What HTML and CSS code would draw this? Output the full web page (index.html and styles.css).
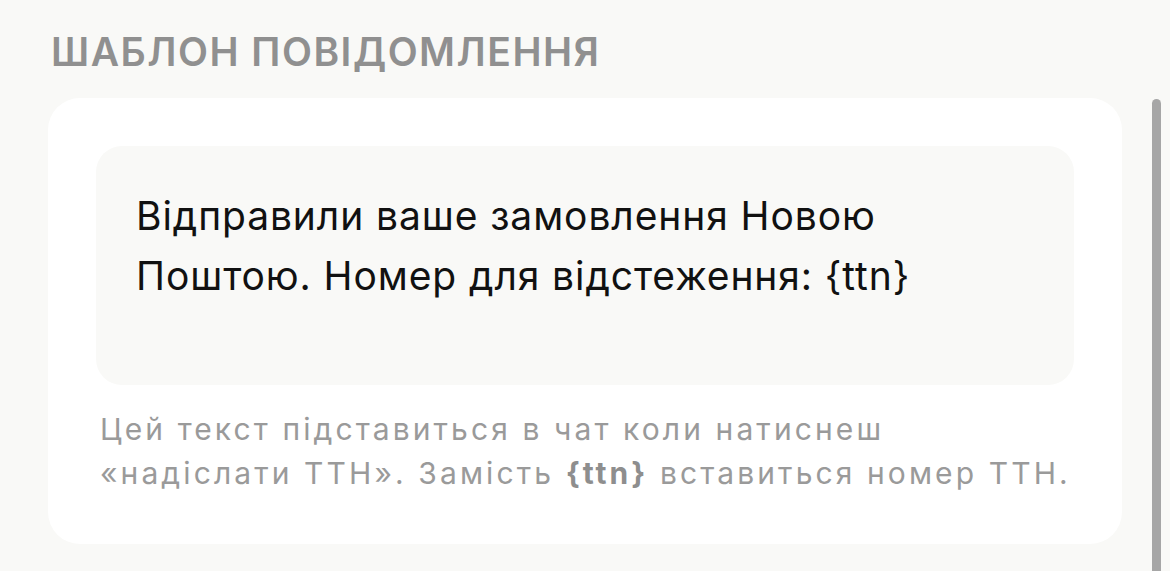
FILE: index.html
```html
<!DOCTYPE html>
<html lang="uk">
<head>
    <meta charset="UTF-8">
    <meta name="viewport" content="width=device-width, initial-scale=1.0">
    <title>Шаблон повідомлення</title>
    <link rel="stylesheet" href="styles.css">
</head>
<body>
    <div class="tpl-screen">
        <h2 class="tpl-section-title">Шаблон повідомлення</h2>
        <div class="tpl-card">
            <div class="tpl-message" id="messageTemplate">Відправили ваше замовлення Новою Поштою. Номер для відстеження: {ttn}</div>
            <p class="tpl-hint">Цей текст підставиться в чат коли натиснеш «надіслати ТТН». Замість <b>{ttn}</b> вставиться номер ТТН.</p>
        </div>
    </div>
    <div class="tpl-scroll-indicator"></div>
</body>
</html>
```

FILE: styles.css
```css
body {
    margin: 0;
    background-color: #f9f9f7;
    font-family: Inter, "Noto Sans", sans-serif;
    overflow: hidden;
}
.tpl-screen {
    padding: 28px 48px 0 48px;
    width: 1074px;
}
.tpl-section-title {
    margin: 0 0 23px 3px;
    font-size: 39px;
    line-height: 47px;
    font-weight: 600;
    letter-spacing: 1.5px;
    text-transform: uppercase;
    color: #909090;
}
.tpl-card {
    background-color: #fff;
    border-radius: 32px;
    padding: 48px 48px 0 48px;
    height: 398px;
}
.tpl-message {
    background-color: #f9f9f7;
    border-radius: 26px;
    height: 239px;
    box-sizing: border-box;
    padding: 40px 40px 0 40px;
    font-size: 39px;
    line-height: 60px;
    letter-spacing: 0.9px;
    color: #111;
}
.tpl-hint {
    margin: 22px 0 0 4px;
    font-size: 30px;
    line-height: 44px;
    letter-spacing: 3.1px;
    color: #9a9a9a;
}
.tpl-hint b {
    font-weight: 700;
    letter-spacing: 3px;
    color: #8e8e8e;
}
.tpl-scroll-indicator {
    position: absolute;
    left: 1152px;
    top: 99px;
    width: 9px;
    height: 480px;
    border-radius: 5px;
    background-color: #a6a6a6;
}
```
